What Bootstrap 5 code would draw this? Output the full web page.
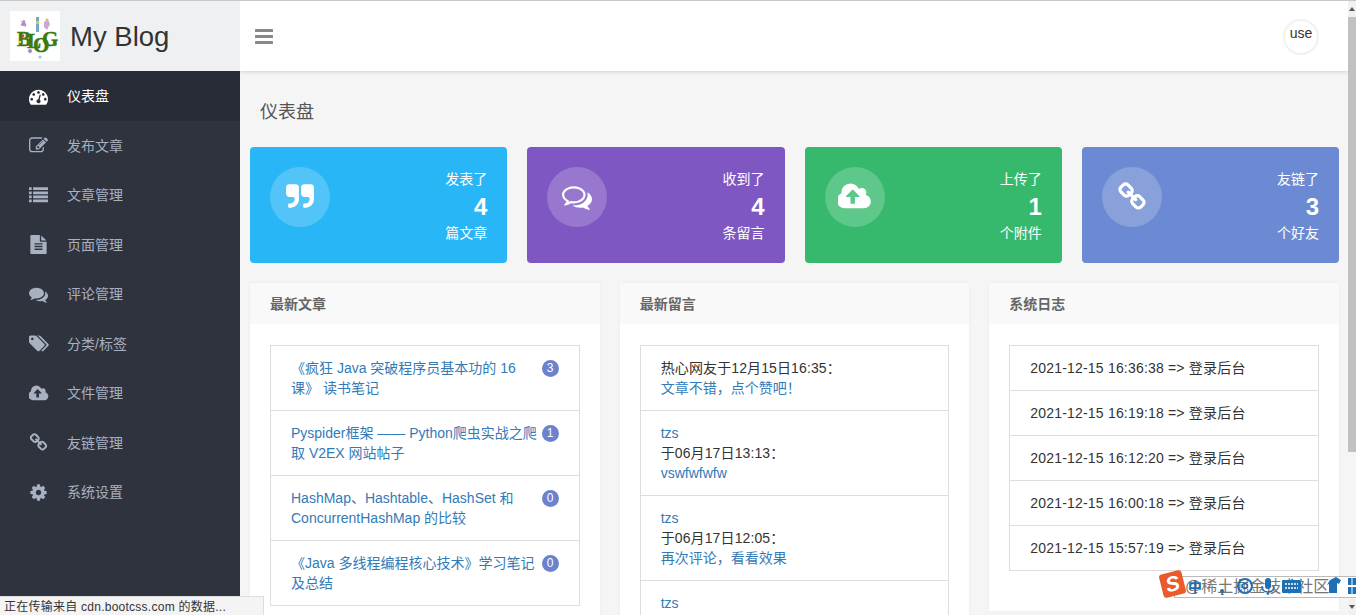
<!DOCTYPE html>
<html lang="zh-CN">
<head>
    <meta charset="UTF-8">
    <meta content="width=device-width, initial-scale=1.0" name="viewport">
    <title>My Blog</title>
    <link href="https://cdn.jsdelivr.net/npm/bootstrap@5.3.0/dist/css/bootstrap.min.css" rel="stylesheet">
    <style>
        html, body { height: 100%; overflow: hidden; }
        body {
            font-family: "Liberation Sans", "Noto Sans CJK SC", sans-serif;
            font-size: 14px;
            line-height: 20px;
            color: #333;
            background: #f5f5f5;
        }
        a { color: #337ab7; text-decoration: none; }
        .top-line { height: 1px; background: #c8c8c8; }
        .app-shell { height: 614px; }

        .side-bar { width: 240px; background: #2f333e; flex-shrink: 0; }
        .logo-box { height: 70px; background: #eff0f1; padding: 11px 10px; }
        .logo-img { width: 50px; height: 50px; background: #fff; flex-shrink: 0; }
        .logo-name { font-size: 27.5px; color: #333; margin-left: 10px; line-height: 52px; height: 50px; }
        .side-link {
            height: 49.5px;
            padding-left: 29px;
            color: #a7b1c2;
        }
        .side-link svg { width: 19px; height: 19px; fill: currentColor; flex-shrink: 0; }
        .side-link svg.wide-ico { width: 20px; }
        .side-link span { margin-left: 19px; }
        .side-link svg.wide-ico + span { margin-left: 18px; }
        .side-link.is-current { background: #282c37; color: #fff; height: 50px; }

        .main-area { flex: 1 1 0; min-width: 0; overflow: hidden; }
        .top-bar {
            height: 70px;
            background: #fff;
            box-shadow: 0 1px 4px rgba(0, 0, 0, .15);
            padding: 0 29px 0 15px;
        }
        .menu-ico { width: 18px; height: 15px; fill: #888; }
        .user-circle {
            width: 36px;
            height: 36px;
            margin-top: 1px;
            border: 2px solid #f1f1f1;
            border-radius: 50%;
            text-align: center;
            line-height: 25px;
            font-size: 14px;
        }
        .page-body { padding: 30px 9px 0 10px; }
        .page-name { font-size: 18px; line-height: 22px; color: #555; font-weight: 400; margin: 0 0 24px 10px; }
        .gap-row { --bs-gutter-x: 20px; }

        .stat-box { height: 116px; border-radius: 4px; padding: 20px 20px 0 20px; color: #fff; }
        .stat-round {
            width: 60px;
            height: 60px;
            border-radius: 50%;
            background: rgba(255, 255, 255, .2);
        }
        .stat-round svg { fill: #fff; height: 30px; width: 30px; }
        .stat-round svg.cloud-ico { height: 32px; width: 34px; }
        .stat-text { line-height: 20px; margin-top: 2px; }
        .stat-num { font-size: 24px; font-weight: 700; line-height: 28px; margin: 4px 0 2px; }
        .stat-blue { background: #29b6f6; }
        .stat-purple { background: #7e57c2; }
        .stat-green { background: #36b96d; }
        .stat-indigo { background: #6b8ad3; }

        .panel-row { margin-top: 20px; }
        .panel-box { border: 0; border-radius: 0; box-shadow: 0 0 4px rgba(0, 0, 0, .04); }
        .panel-head {
            height: 41px;
            background: #f9f9f9;
            border: 0;
            border-radius: 0 !important;
            padding: 11px 20px 0;
            font-weight: 700;
            color: #666;
        }
        .panel-inner { padding: 21px 20px 20px; }
        .panel-list { margin-bottom: 20px; border-radius: 0; }
        .panel-list .list-group-item {
            padding: 12px 20px;
            border-color: #ddd;
            border-radius: 0;
            color: #333;
        }
        .count-dot {
            width: 17px;
            height: 17px;
            padding: 0;
            margin-top: 2px;
            border-radius: 50%;
            background: #6b83cf;
            font-size: 12px;
            font-weight: 400;
            line-height: 17px;
            flex-shrink: 0;
        }
        .date-line { letter-spacing: .12px; }
        .log-line { letter-spacing: .19px; }

        .fake-scroll { width: 8px; background: #f5f5f5; flex-shrink: 0; }
        .scroll-end { height: 16px; background: #f1f1f1; }
        .scroll-thumb { height: 435px; background: #c1c1c1; }
        .scroll-arrow-up { border: 3px solid transparent; border-bottom: 4px solid #555; border-top: 0; }
        .scroll-arrow-down { border: 3px solid transparent; border-top: 4px solid #555; border-bottom: 0; margin-top: 6px; }

        .load-status {
            position: absolute;
            left: 0;
            bottom: 0;
            width: 264px;
            height: 19px;
            background: #f4f4f4;
            border: 1px solid #ddd;
            border-width: 1px 1px 0 0;
            padding-left: 4px;
            font-size: 12px;
            letter-spacing: .25px;
            line-height: 20px;
            white-space: nowrap;
        }
        .ime-bar {
            position: absolute;
            left: 1174px;
            top: 576px;
            width: 182px;
            height: 22px;
            background: rgba(255, 255, 255, .94);
            border: 1px solid #bbb;
            border-right: 0;
            padding-left: 10px;
            color: #777;
            font-size: 16px;
            line-height: 20px;
            white-space: nowrap;
        }
        .ime-logo {
            position: absolute;
            left: 1161px;
            top: 572px;
            width: 23px;
            height: 24px;
            background: #ea5a2a;
            border-radius: 3px;
            transform: rotate(-14deg);
            color: #fff;
            font-weight: 700;
            font-style: italic;
            font-size: 21px;
            line-height: 24px;
            text-align: center;
        }
        .ime-icons { position: absolute; left: 1186px; top: 576px; width: 170px; height: 22px; }
    </style>
</head>
<body>
<div class="top-line"></div>
<div class="app-shell d-flex">
    <aside class="side-bar">
        <div class="logo-box d-flex align-items-center">
            <div class="logo-img">
                <svg viewBox="0 0 50 50" width="50" height="50">
                    <path d="M11 14l3-5 2 6zM14 12l-3-2" fill="#b58bc9" stroke="#b58bc9"/>
                    <rect x="26" y="6" width="3" height="15" fill="#6fa8c8"/>
                    <rect x="26" y="10" width="3" height="3" fill="#d9c35a"/>
                    <path d="M34 11l4-2 2 4-3 6-3-3z" fill="#c9a7d8"/>
                    <circle cx="37" cy="9" r="1.6" fill="#d9c35a"/>
                    <circle cx="20" cy="40" r="2" fill="#9b8ad0"/>
                    <circle cx="30" cy="46" r="1.5" fill="#8fc7d8"/>
                    <text x="7 17 23 32" y="35 37 41 35" font-family="Liberation Serif" font-weight="700" font-size="21" fill="#3a7a10" stroke="#3a7a10" stroke-width=".5">BLOG</text>
                    <circle cx="13" cy="25" r="1.4" fill="#d6452f"/>
                    <circle cx="10" cy="31" r="1.3" fill="#e5cf3a"/>
                </svg>
            </div>
            <div class="logo-name">My Blog</div>
        </div>
        <nav class="nav flex-column">
            <a class="side-link is-current d-flex align-items-center" href="#"><svg viewBox="0 0 1792 1792"><path d="M384 1152q0-53-37.5-90.5t-90.5-37.5-90.5 37.5-37.5 90.5 37.5 90.5 90.5 37.5 90.5-37.5 37.5-90.5zm192-448q0-53-37.5-90.5t-90.5-37.5-90.5 37.5-37.5 90.5 37.5 90.5 90.5 37.5 90.5-37.5 37.5-90.5zm428 481l101-382q6-26-7.5-48.5t-38.5-29.5-48 6.5-30 39.5l-101 382q-60 5-107 43.5t-63 98.5q-20 77 20 146t117 89 146-20 89-117q16-60-6-117t-72-91zm660-33q0-53-37.5-90.5t-90.5-37.5-90.5 37.5-37.5 90.5 37.5 90.5 90.5 37.5 90.5-37.5 37.5-90.5zm-640-640q0-53-37.5-90.5t-90.5-37.5-90.5 37.5-37.5 90.5 37.5 90.5 90.5 37.5 90.5-37.5 37.5-90.5zm448 192q0-53-37.5-90.5t-90.5-37.5-90.5 37.5-37.5 90.5 37.5 90.5 90.5 37.5 90.5-37.5 37.5-90.5zm320 448q0 261-141 483-19 29-54 29h-1402q-35 0-54-29-141-221-141-483 0-182 71-348t191-286 286-191 348-71 348 71 286 191 191 286 71 348z"/></svg><span>仪表盘</span></a>
            <a class="side-link d-flex align-items-center" href="#"><svg viewBox="0 0 1792 1792"><path d="M888 1184l116-116-152-152-116 116v56h96v96h56zm440-720q-16-16-33 1l-350 350q-17 17-1 33t33-1l350-350q17-17 1-33zm80 594v190q0 119-84.5 203.5t-203.5 84.5h-832q-119 0-203.5-84.5t-84.5-203.5v-832q0-119 84.5-203.5t203.5-84.5h832q63 0 117 25 15 7 18 23 3 17-9 29l-49 49q-14 14-32 8-23-6-45-6h-832q-66 0-113 47t-47 113v832q0 66 47 113t113 47h832q66 0 113-47t47-113v-126q0-13 9-22l64-64q15-15 35-7t20 29zm-96-738l288 288-672 672h-288v-288zm444 132l-92 92-288-288 92-92q28-28 68-28t68 28l152 152q28 28 28 68t-28 68z"/></svg><span>发布文章</span></a>
            <a class="side-link d-flex align-items-center" href="#"><svg viewBox="0 0 1792 1792"><path d="M256 1312v192q0 13-9.5 22.5t-22.5 9.5h-192q-13 0-22.5-9.5t-9.5-22.5v-192q0-13 9.5-22.5t22.5-9.5h192q13 0 22.5 9.5t9.5 22.5zm0-384v192q0 13-9.5 22.5t-22.5 9.5h-192q-13 0-22.5-9.5t-9.5-22.5v-192q0-13 9.5-22.5t22.5-9.5h192q13 0 22.5 9.5t9.5 22.5zm0-384v192q0 13-9.5 22.5t-22.5 9.5h-192q-13 0-22.5-9.5t-9.5-22.5v-192q0-13 9.5-22.5t22.5-9.5h192q13 0 22.5 9.5t9.5 22.5zm1536 768v192q0 13-9.5 22.5t-22.5 9.5h-1344q-13 0-22.5-9.5t-9.5-22.5v-192q0-13 9.5-22.5t22.5-9.5h1344q13 0 22.5 9.5t9.5 22.5zm-1536-1152v192q0 13-9.5 22.5t-22.5 9.5h-192q-13 0-22.5-9.5t-9.5-22.5v-192q0-13 9.5-22.5t22.5-9.5h192q13 0 22.5 9.5t9.5 22.5zm1536 768v192q0 13-9.5 22.5t-22.5 9.5h-1344q-13 0-22.5-9.5t-9.5-22.5v-192q0-13 9.5-22.5t22.5-9.5h1344q13 0 22.5 9.5t9.5 22.5zm0-384v192q0 13-9.5 22.5t-22.5 9.5h-1344q-13 0-22.5-9.5t-9.5-22.5v-192q0-13 9.5-22.5t22.5-9.5h1344q13 0 22.5 9.5t9.5 22.5zm0-384v192q0 13-9.5 22.5t-22.5 9.5h-1344q-13 0-22.5-9.5t-9.5-22.5v-192q0-13 9.5-22.5t22.5-9.5h1344q13 0 22.5 9.5t9.5 22.5z"/></svg><span>文章管理</span></a>
            <a class="side-link d-flex align-items-center" href="#"><svg viewBox="0 0 1792 1792"><path d="M1596 476q14 14 28 36h-472v-472q22 14 36 28zm-476 164h544v1056q0 40-28 68t-68 28h-1344q-40 0-68-28t-28-68v-1600q0-40 28-68t68-28h800v544q0 40 28 68t68 28zm160 736v-64q0-14-9-23t-23-9h-704q-14 0-23 9t-9 23v64q0 14 9 23t23 9h704q14 0 23-9t9-23zm0-256v-64q0-14-9-23t-23-9h-704q-14 0-23 9t-9 23v64q0 14 9 23t23 9h704q14 0 23-9t9-23zm0-256v-64q0-14-9-23t-23-9h-704q-14 0-23 9t-9 23v64q0 14 9 23t23 9h704q14 0 23-9t9-23z"/></svg><span>页面管理</span></a>
            <a class="side-link d-flex align-items-center" href="#"><svg viewBox="0 0 1792 1792"><path d="M1408 768q0 139-94 257t-256.5 186.5-353.5 68.5q-86 0-176-16-124 88-278 128-36 9-86 16h-3q-11 0-20.5-8t-11.5-21q-1-3-1-6.5t.5-6.5 2-6l2.5-5 3.5-5.5 4-5 4.5-5 4-4.5q5-6 23-25t26-29.5 22.5-29 25-38.5 20.5-44q-124-72-195-177t-71-224q0-139 94-257t256.5-186.5 353.5-68.5 353.5 68.5 256.5 186.5 94 257zm384 256q0 120-71 224.5t-195 176.5q10 24 20.5 44t25 38.5 22.5 29 26 29.5 23 25q1 1 4 4.5t4.5 5 4 5 3.5 5.5l2.5 5 2 6 .5 6.5-1 6.5q-3 14-13 22t-22 7q-50-7-86-16-154-40-278-128-90 16-176 16-271 0-472-132 58 4 88 4 161 0 309-45t264-129q125-92 192-212t67-254q0-77-23-152 129 71 204 178t75 230z"/></svg><span>评论管理</span></a>
            <a class="side-link d-flex align-items-center" href="#"><svg class="wide-ico" viewBox="0 0 1920 1792"><path d="M448 448q0-53-37.5-90.5t-90.5-37.5-90.5 37.5-37.5 90.5 37.5 90.5 90.5 37.5 90.5-37.5 37.5-90.5zm1067 576q0 53-37 90l-491 492q-39 37-91 37-53 0-90-37l-715-716q-38-37-64.5-101t-26.5-117v-416q0-52 38-90t90-38h416q53 0 117 26.5t102 64.5l715 714q37 39 37 91zm384 0q0 53-37 90l-491 492q-39 37-91 37-36 0-59-14t-53-45l470-470q37-37 37-90 0-52-37-91l-715-714q-38-38-102-64.5t-117-26.5h224q53 0 117 26.5t102 64.5l715 714q37 39 37 91z"/></svg><span>分类/标签</span></a>
            <a class="side-link d-flex align-items-center" href="#"><svg class="wide-ico" viewBox="0 0 1920 1792"><path d="M1216 864q0-14-9-23l-352-352q-9-9-23-9t-23 9l-351 351q-10 12-10 24 0 14 9 23t23 9h224v352q0 13 9.5 22.5t22.5 9.5h192q13 0 22.5-9.5t9.5-22.5v-352h224q13 0 22.5-9.5t9.5-22.5zm640 288q0 159-112.5 271.5t-271.5 112.5h-1088q-185 0-316.5-131.5t-131.5-316.5q0-130 70-240t188-165q-2-30-2-43 0-212 150-362t362-150q156 0 285.5 87t188.5 231q71-62 166-62 106 0 181 75t75 181q0 76-41 138 130 31 213.5 135.5t83.5 238.5z"/></svg><span>文件管理</span></a>
            <a class="side-link d-flex align-items-center" href="#"><svg viewBox="0 0 1792 1792"><path d="M1520 1216q0-40-28-68l-208-208q-28-28-68-28-42 0-72 32 3 3 19 18.5t21.5 21.5 15 19 13 25.5 3.5 27.5q0 40-28 68t-68 28q-15 0-27.5-3.5t-25.5-13-19-15-21.5-21.5-18.5-19q-33 31-33 73 0 40 28 68l206 207q27 27 68 27 40 0 68-26l147-146q28-28 28-67zm-703-705q0-40-28-68l-206-207q-28-28-68-28-39 0-68 27l-147 146q-28 28-28 67 0 40 28 68l208 208q27 27 68 27 42 0 72-31-3-3-19-18.5t-21.5-21.5-15-19-13-25.5-3.5-27.5q0-40 28-68t68-28q15 0 27.5 3.5t25.5 13 19 15 21.5 21.5 18.5 19q33-31 33-73zm895 705q0 120-85 203l-147 146q-83 83-203 83-121 0-204-85l-206-207q-83-83-83-203 0-123 88-209l-88-88q-86 88-208 88-120 0-204-84l-208-208q-84-84-84-204t85-203l147-146q83-83 203-83 121 0 204 85l206 207q83 83 83 203 0 123-88 209l88 88q86-88 208-88 120 0 204 84l208 208q84 84 84 204z"/></svg><span>友链管理</span></a>
            <a class="side-link d-flex align-items-center" href="#"><svg viewBox="0 0 1792 1792"><path d="M1152 896q0-106-75-181t-181-75-181 75-75 181 75 181 181 75 181-75 75-181zm512-109v222q0 12-8 23t-20 13l-185 28q-19 54-39 91 35 50 107 138 10 12 10 25t-9 23q-27 37-99 108t-94 71q-12 0-26-9l-138-108q-44 23-91 38-16 136-29 186-7 28-36 28h-222q-14 0-24.5-8.5t-11.5-21.5l-28-184q-49-16-90-37l-141 107q-10 9-25 9-14 0-25-11-126-114-165-168-7-10-7-23 0-12 8-23 15-21 51-66.5t54-70.5q-27-50-41-99l-183-27q-13-2-21-12.5t-8-23.5v-222q0-12 8-23t19-13l186-28q14-46 39-92-40-57-107-138-10-12-10-24 0-10 9-23 26-36 98.5-107.5t94.5-71.5q13 0 26 10l138 107q44-23 91-38 16-136 29-186 7-28 36-28h222q14 0 24.5 8.5t11.5 21.5l28 184q49 16 90 37l142-107q9-9 24-9 13 0 25 10 129 119 165 170 7 8 7 22 0 12-8 23-15 21-51 66.5t-54 70.5q26 50 41 98l183 28q13 2 21 12.5t8 23.5z"/></svg><span>系统设置</span></a>
        </nav>
    </aside>

    <main class="main-area">
        <div class="top-bar d-flex align-items-center justify-content-between">
            <svg class="menu-ico" viewBox="0 0 18 15"><rect width="18" height="3" rx=".6"/><rect y="6" width="18" height="3" rx=".6"/><rect y="12" width="18" height="3" rx=".6"/></svg>
            <div class="user-circle">use</div>
        </div>
        <div class="page-body">
            <h1 class="page-name">仪表盘</h1>
            <div class="row gap-row">
                <div class="col-3">
                    <div class="stat-box stat-blue d-flex justify-content-between">
                        <div class="stat-round d-flex align-items-center justify-content-center"><svg viewBox="0 0 1792 1792"><path d="M832 320v704q0 104-40.5 198.5t-109.5 163.5-163.5 109.5-198.5 40.5h-64q-26 0-45-19t-19-45v-128q0-26 19-45t45-19h64q106 0 181-75t75-181v-32q0-40-28-68t-68-28h-224q-80 0-136-56t-56-136v-384q0-80 56-136t136-56h384q80 0 136 56t56 136zm896 0v704q0 104-40.5 198.5t-109.5 163.5-163.5 109.5-198.5 40.5h-64q-26 0-45-19t-19-45v-128q0-26 19-45t45-19h64q106 0 181-75t75-181v-32q0-40-28-68t-68-28h-224q-80 0-136-56t-56-136v-384q0-80 56-136t136-56h384q80 0 136 56t56 136z"/></svg></div>
                        <div class="stat-text text-end">发表了<div class="stat-num">4</div>篇文章</div>
                    </div>
                </div>
                <div class="col-3">
                    <div class="stat-box stat-purple d-flex justify-content-between">
                        <div class="stat-round d-flex align-items-center justify-content-center"><svg viewBox="0 0 1792 1792"><path d="M704 384q-153 0-286 52t-211.5 141-78.5 191q0 82 53 158t149 132l97 56-35 84q34-20 62-39l44-31 53 10q82 15 153 15 153 0 286-52t211.5-141 78.5-191-78.5-191-211.5-141-286-52zm0-128q191 0 353.5 68.5t256.5 186.5 94 257-94 257-256.5 186.5-353.5 68.5q-86 0-176-16-124 88-278 128-36 9-86 16h-3q-11 0-20.5-8t-11.5-21q-1-3-1-6.5t.5-6.5 2-6l2.5-5 3.5-5.5 4-5 4.5-5 4-4.5q5-6 23-25t26-29.5 22.5-29 25-38.5 20.5-44q-124-72-195-177t-71-224q0-139 94-257t256.5-186.5 353.5-68.5zm820 1169q10 24 20.5 44t25 38.5 22.5 29 26 29.5 23 25q1 1 4 4.5t4.5 5 4 5 3.5 5.5l2.5 5 2 6 .5 6.5-1 6.5q-3 14-13 22t-22 7q-50-7-86-16-154-40-278-128-90 16-176 16-271 0-472-132 58 4 88 4 161 0 309-45t264-129q125-92 192-212t67-254q0-77-23-152 129 71 204 178t75 230q0 120-71 224.5t-195 176.5z"/></svg></div>
                        <div class="stat-text text-end">收到了<div class="stat-num">4</div>条留言</div>
                    </div>
                </div>
                <div class="col-3">
                    <div class="stat-box stat-green d-flex justify-content-between">
                        <div class="stat-round d-flex align-items-center justify-content-center"><svg class="cloud-ico" viewBox="0 0 1920 1792"><path d="M1216 864q0-14-9-23l-352-352q-9-9-23-9t-23 9l-351 351q-10 12-10 24 0 14 9 23t23 9h224v352q0 13 9.5 22.5t22.5 9.5h192q13 0 22.5-9.5t9.5-22.5v-352h224q13 0 22.5-9.5t9.5-22.5zm640 288q0 159-112.5 271.5t-271.5 112.5h-1088q-185 0-316.5-131.5t-131.5-316.5q0-130 70-240t188-165q-2-30-2-43 0-212 150-362t362-150q156 0 285.5 87t188.5 231q71-62 166-62 106 0 181 75t75 181q0 76-41 138 130 31 213.5 135.5t83.5 238.5z"/></svg></div>
                        <div class="stat-text text-end">上传了<div class="stat-num">1</div>个附件</div>
                    </div>
                </div>
                <div class="col-3">
                    <div class="stat-box stat-indigo d-flex justify-content-between">
                        <div class="stat-round d-flex align-items-center justify-content-center"><svg viewBox="0 0 1792 1792"><path d="M1520 1216q0-40-28-68l-208-208q-28-28-68-28-42 0-72 32 3 3 19 18.5t21.5 21.5 15 19 13 25.5 3.5 27.5q0 40-28 68t-68 28q-15 0-27.5-3.5t-25.5-13-19-15-21.5-21.5-18.5-19q-33 31-33 73 0 40 28 68l206 207q27 27 68 27 40 0 68-26l147-146q28-28 28-67zm-703-705q0-40-28-68l-206-207q-28-28-68-28-39 0-68 27l-147 146q-28 28-28 67 0 40 28 68l208 208q27 27 68 27 42 0 72-31-3-3-19-18.5t-21.5-21.5-15-19-13-25.5-3.5-27.5q0-40 28-68t68-28q15 0 27.5 3.5t25.5 13 19 15 21.5 21.5 18.5 19q33-31 33-73zm895 705q0 120-85 203l-147 146q-83 83-203 83-121 0-204-85l-206-207q-83-83-83-203 0-123 88-209l-88-88q-86 88-208 88-120 0-204-84l-208-208q-84-84-84-204t85-203l147-146q83-83 203-83 121 0 204 85l206 207q83 83 83 203 0 123-88 209l88 88q86-88 208-88 120 0 204 84l208 208q84 84 84 204z"/></svg></div>
                        <div class="stat-text text-end">友链了<div class="stat-num">3</div>个好友</div>
                    </div>
                </div>
            </div>

            <div class="row gap-row panel-row">
                <div class="col-4">
                    <div class="card panel-box">
                        <div class="card-header panel-head">最新文章</div>
                        <div class="card-body panel-inner">
                            <ul class="list-group panel-list">
                                <li class="list-group-item d-flex justify-content-between"><a href="#">《疯狂 Java 突破程序员基本功的 16 课》 读书笔记</a><span class="badge count-dot">3</span></li>
                                <li class="list-group-item d-flex justify-content-between"><a href="#">Pyspider框架 —— Python爬虫实战之爬取 V2EX 网站帖子</a><span class="badge count-dot">1</span></li>
                                <li class="list-group-item d-flex justify-content-between"><a href="#">HashMap、Hashtable、HashSet 和 ConcurrentHashMap 的比较</a><span class="badge count-dot">0</span></li>
                                <li class="list-group-item d-flex justify-content-between"><a href="#">《Java 多线程编程核心技术》学习笔记及总结</a><span class="badge count-dot">0</span></li>
                            </ul>
                        </div>
                    </div>
                </div>
                <div class="col-4">
                    <div class="card panel-box">
                        <div class="card-header panel-head">最新留言</div>
                        <div class="card-body panel-inner">
                            <ul class="list-group panel-list">
                                <li class="list-group-item"><span class="date-line">热心网友于12月15日16:35：</span><br><a href="#">文章不错，点个赞吧！</a></li>
                                <li class="list-group-item"><a href="#">tzs</a><br><span class="date-line">于06月17日13:13：</span><br><a href="#">vswfwfwfw</a></li>
                                <li class="list-group-item"><a href="#">tzs</a><br><span class="date-line">于06月17日12:05：</span><br><a href="#">再次评论，看看效果</a></li>
                                <li class="list-group-item"><a href="#">tzs</a></li>
                            </ul>
                        </div>
                    </div>
                </div>
                <div class="col-4">
                    <div class="card panel-box">
                        <div class="card-header panel-head">系统日志</div>
                        <div class="card-body panel-inner">
                            <ul class="list-group panel-list">
                                <li class="list-group-item log-line">2021-12-15 16:36:38 =&gt; 登录后台</li>
                                <li class="list-group-item log-line">2021-12-15 16:19:18 =&gt; 登录后台</li>
                                <li class="list-group-item log-line">2021-12-15 16:12:20 =&gt; 登录后台</li>
                                <li class="list-group-item log-line">2021-12-15 16:00:18 =&gt; 登录后台</li>
                                <li class="list-group-item log-line">2021-12-15 15:57:19 =&gt; 登录后台</li>
                            </ul>
                        </div>
                    </div>
                </div>
            </div>
        </div>
    </main>

    <div class="fake-scroll d-flex flex-column">
        <div class="scroll-end d-flex justify-content-center align-items-center"><div class="scroll-arrow-up"></div></div>
        <div class="scroll-thumb"></div>
        <div class="flex-grow-1"></div>
        <div class="scroll-end d-flex justify-content-center"><div class="scroll-arrow-down"></div></div>
    </div>
</div>

<div class="load-status">正在传输来自 cdn.bootcss.com 的数据...</div>

<div class="ime-bar">@稀土掘金技术社区</div>
<div class="ime-logo">S</div>
<svg class="ime-icons" viewBox="0 0 170 22" fill="#1f6fb5">
    <text x="2" y="16" font-size="14" font-family="Noto Sans CJK SC" font-weight="700">中</text>
    <circle cx="36" cy="15" r="2"/><path d="M36 16l2 3-3 0z"/>
    <circle cx="59" cy="10" r="7" fill="none" stroke="#1f6fb5" stroke-width="2"/><circle cx="59" cy="10" r="2.5" fill="none" stroke="#1f6fb5" stroke-width="1.5"/>
    <rect x="79" y="2" width="6" height="11" rx="3"/><path d="M76 10q0 6 6 6t6-6M82 16v3" fill="none" stroke="#1f6fb5" stroke-width="1.5"/>
    <rect x="96" y="4" width="19" height="13" rx="1"/><path d="M99 8h13M99 12h13" stroke="#fff" stroke-width="1.5" stroke-dasharray="2 1"/>
    <path d="M144 4l6-3 5 3-2 4-2-1v10h-8v-9l-2 1z"/>
    <rect x="162" y="2" width="3.5" height="7"/><rect x="166.5" y="2" width="3.5" height="7"/><rect x="162" y="11" width="3.5" height="7"/><rect x="166.5" y="11" width="3.5" height="7"/>
</svg>

<script src="https://cdn.jsdelivr.net/npm/bootstrap@5.3.0/dist/js/bootstrap.bundle.min.js"></script>
</body>
</html>
